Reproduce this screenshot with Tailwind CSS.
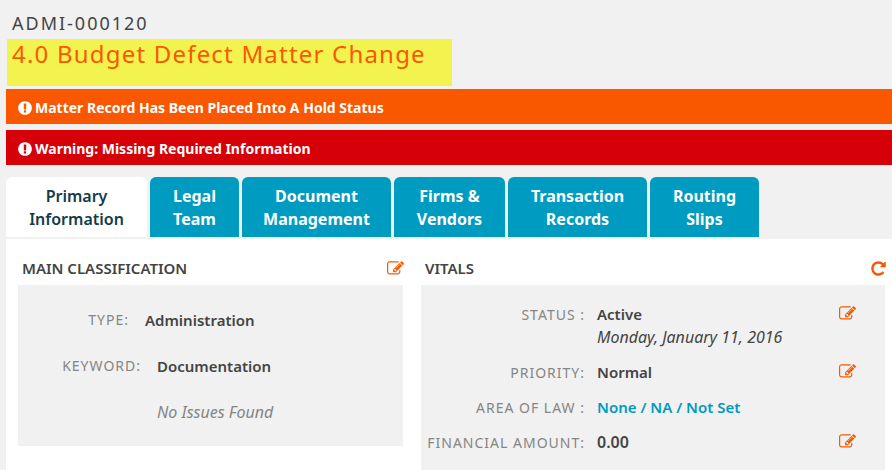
<!DOCTYPE html>
<html lang="en">
<head>
    <meta charset="UTF-8">
    <meta name="viewport" content="width=device-width, initial-scale=1.0">
    <title>ADMI-000120 - 4.0 Budget Defect Matter Change</title>
    <script src="https://cdn.jsdelivr.net/npm/@tailwindcss/browser@4"></script>
</head>
<body class="bg-[#f1f1f1] min-h-screen flex flex-col pl-1.5 text-[#444] font-['Noto_Sans',sans-serif]">

    <!-- Shared icons -->
    <svg class="hidden" aria-hidden="true">
        <symbol id="icon-alert" viewBox="0 0 1792 1792"><path d="M896 128q209 0 385.5 103t279.5 279.5 103 385.5-103 385.5-279.5 279.5-385.5 103-385.5-103-279.5-279.5-103-385.5 103-385.5 279.5-279.5 385.5-103zm128 1247v-190q0-14-9-23.5t-22-9.5h-192q-13 0-23 10t-10 23v190q0 13 10 23t23 10h192q13 0 22-9.5t9-23.5zm-2-344l18-621q0-12-10-18-10-8-24-8h-220q-14 0-24 8-10 6-10 18l17 621q0 10 10 17.5t24 7.5h185q14 0 23.5-7.5t10.5-17.5z"/></symbol>
        <symbol id="icon-edit" viewBox="0 0 1792 1792"><path d="M888 1184l116-116-152-152-116 116v56h96v96h56zm440-720q-16-16-33 1l-350 350q-17 17-1 33t33-1l350-350q17-17 1-33zm80 594v190q0 119-84.5 203.5t-203.5 84.5h-832q-119 0-203.5-84.5t-84.5-203.5v-832q0-119 84.5-203.5t203.5-84.5h832q63 0 117 25 15 7 18 23 3 17-9 29l-49 49q-14 14-32 8-23-6-45-6h-832q-66 0-113 47t-47 113v832q0 66 47 113t113 47h832q66 0 113-47t47-113v-126q0-13 9-22l64-64q15-15 35-7t20 29zm-96-738l288 288-672 672h-288v-288zm444 132l-92 92-288-288 92-92q28-28 68-28t68 28l152 152q28 28 28 68t-28 68z"/></symbol>
        <symbol id="icon-reload" viewBox="0 0 1792 1792"><path d="M1664 256v448q0 26-19 45t-45 19h-448q-42 0-59-40-17-39 14-69l138-138q-148-137-349-137-104 0-198.5 40.5t-163.5 109.5-109.5 163.5-40.5 198.5 40.5 198.5 109.5 163.5 163.5 109.5 198.5 40.5q119 0 225-52t179-147q7-10 23-12 15 0 25 9l137 138q9 8 9.5 20.5t-7.5 22.5q-109 132-264 204.5t-327 72.5q-156 0-298-61t-245-164-164-245-61-298 61-298 164-245 245-164 298-61q147 0 284.5 55.5t244.5 156.5l130-129q29-31 70-14 39 17 39 59z"/></symbol>
    </svg>

    <header class="pt-2">
        <p class="pl-1.5 h-[31px] text-lg leading-[31px] tracking-[2px]">ADMI-000120</p>
        <h1 class="ml-px w-[445px] h-[47px] pl-[5px] bg-[#f3f350] text-2xl leading-[30px] tracking-wider text-[#fa5800] whitespace-nowrap">4.0 Budget Defect Matter Change</h1>
    </header>

    <div class="mt-[3px] flex flex-col gap-1.5 text-sm font-bold text-white">
        <p class="h-[35px] flex items-center gap-0.5 pl-[11px] pt-0.5 bg-[#fa5800]" role="alert">
            <svg class="size-4 fill-current" aria-hidden="true"><use href="#icon-alert"/></svg>
            Matter Record Has Been Placed Into A Hold Status
        </p>
        <p class="h-[35px] flex items-center gap-0.5 pl-[11px] pt-0.5 bg-[#d50008]" role="alert">
            <svg class="size-4 fill-current" aria-hidden="true"><use href="#icon-alert"/></svg>
            Warning: Missing Required Information
        </p>
    </div>

    <nav class="mt-3 flex gap-[3px] text-base leading-[23px] font-bold text-white text-center">
        <button class="w-[141px] h-15 pt-0.5 rounded-t-md bg-white text-[#123c4a] font-semibold">Primary<br>Information</button>
        <button class="w-[89px] h-15 pt-0.5 rounded-t-md bg-[#009bc0]">Legal<br>Team</button>
        <button class="w-[149px] h-15 pt-0.5 rounded-t-md bg-[#009bc0]">Document<br>Management</button>
        <button class="w-[111px] h-15 pt-0.5 rounded-t-md bg-[#009bc0]">Firms &amp;<br>Vendors</button>
        <button class="w-[139px] h-15 pt-0.5 rounded-t-md bg-[#009bc0]">Transaction<br>Records</button>
        <button class="w-[109px] h-15 pt-0.5 rounded-t-md bg-[#009bc0]">Routing<br>Slips</button>
    </nav>

    <main class="mt-0.5 grow grid grid-cols-[385fr_464fr] gap-[18px] bg-white pl-3 pr-[7px] pt-[18px]">
        <section>
            <div class="h-7 flex items-start justify-between pl-1">
                <h2 class="text-[15px] leading-[22px] font-semibold">MAIN CLASSIFICATION</h2>
                <button class="mt-[3px] -mr-px text-[#fa5800]" aria-label="Edit main classification"><svg class="size-[17px] fill-current"><use href="#icon-edit"/></svg></button>
            </div>
            <dl class="bg-[#f1f1f1] pt-3 pb-[11px]">
                <div class="h-[46px] flex items-center gap-4">
                    <dt class="w-[111px] text-right text-sm tracking-[1px] text-[#858585]">TYPE:</dt>
                    <dd class="text-[15px] font-semibold">Administration</dd>
                </div>
                <div class="h-[46px] flex items-center gap-4">
                    <dt class="w-[123px] text-right text-sm tracking-[1px] text-[#858585]">KEYWORD:</dt>
                    <dd class="text-[15px] font-semibold">Documentation</dd>
                </div>
                <div class="h-[46px] flex items-center pl-[139px]">
                    <dd class="text-base italic text-[#858585]">No Issues Found</dd>
                </div>
            </dl>
        </section>

        <section class="flex flex-col">
            <div class="h-7 flex items-start justify-between pl-1">
                <h2 class="text-[15px] leading-[22px] font-semibold">VITALS</h2>
                <button class="mt-[3px] -mr-0.5 text-[#fa5800]" aria-label="Refresh vitals"><svg class="size-[17px] fill-current"><use href="#icon-reload"/></svg></button>
            </div>
            <dl class="grow flex flex-col gap-3 bg-[#f1f1f1] pt-[18px] pb-4 pr-[29px] leading-[23px]">
                <div class="flex gap-3">
                    <dt class="w-[164px] shrink-0 text-right whitespace-nowrap text-sm/[23px] tracking-[1px] text-[#858585]">STATUS :</dt>
                    <dd class="grow text-[15px]/[23px] font-semibold">Active<br><em class="text-base/[23px] font-normal">Monday, January 11, 2016</em></dd>
                    <dd><button class="mt-0.5 block text-[#fa5800]" aria-label="Edit status"><svg class="size-[17px] fill-current"><use href="#icon-edit"/></svg></button></dd>
                </div>
                <div class="flex gap-3">
                    <dt class="w-[164px] shrink-0 text-right whitespace-nowrap text-sm/[23px] tracking-[1px] text-[#858585]">PRIORITY:</dt>
                    <dd class="grow text-[15px]/[23px] font-semibold">Normal</dd>
                    <dd><button class="mt-0.5 block text-[#fa5800]" aria-label="Edit priority"><svg class="size-[17px] fill-current"><use href="#icon-edit"/></svg></button></dd>
                </div>
                <div class="flex gap-3">
                    <dt class="w-[164px] shrink-0 text-right whitespace-nowrap text-sm/[23px] tracking-[1px] text-[#858585]">AREA OF LAW :</dt>
                    <dd class="grow text-[15px]/[23px] font-semibold"><a href="#" class="text-[#009bc0]">None / NA / Not Set</a></dd>
                </div>
                <div class="flex gap-3">
                    <dt class="w-[164px] shrink-0 text-right whitespace-nowrap text-sm/[23px] tracking-[1px] text-[#858585]">FINANCIAL AMOUNT:</dt>
                    <dd class="grow text-base/[23px] font-semibold">0.00</dd>
                    <dd><button class="mt-0.5 block text-[#fa5800]" aria-label="Edit financial amount"><svg class="size-[17px] fill-current"><use href="#icon-edit"/></svg></button></dd>
                </div>
            </dl>
        </section>
    </main>
</body>
</html>
